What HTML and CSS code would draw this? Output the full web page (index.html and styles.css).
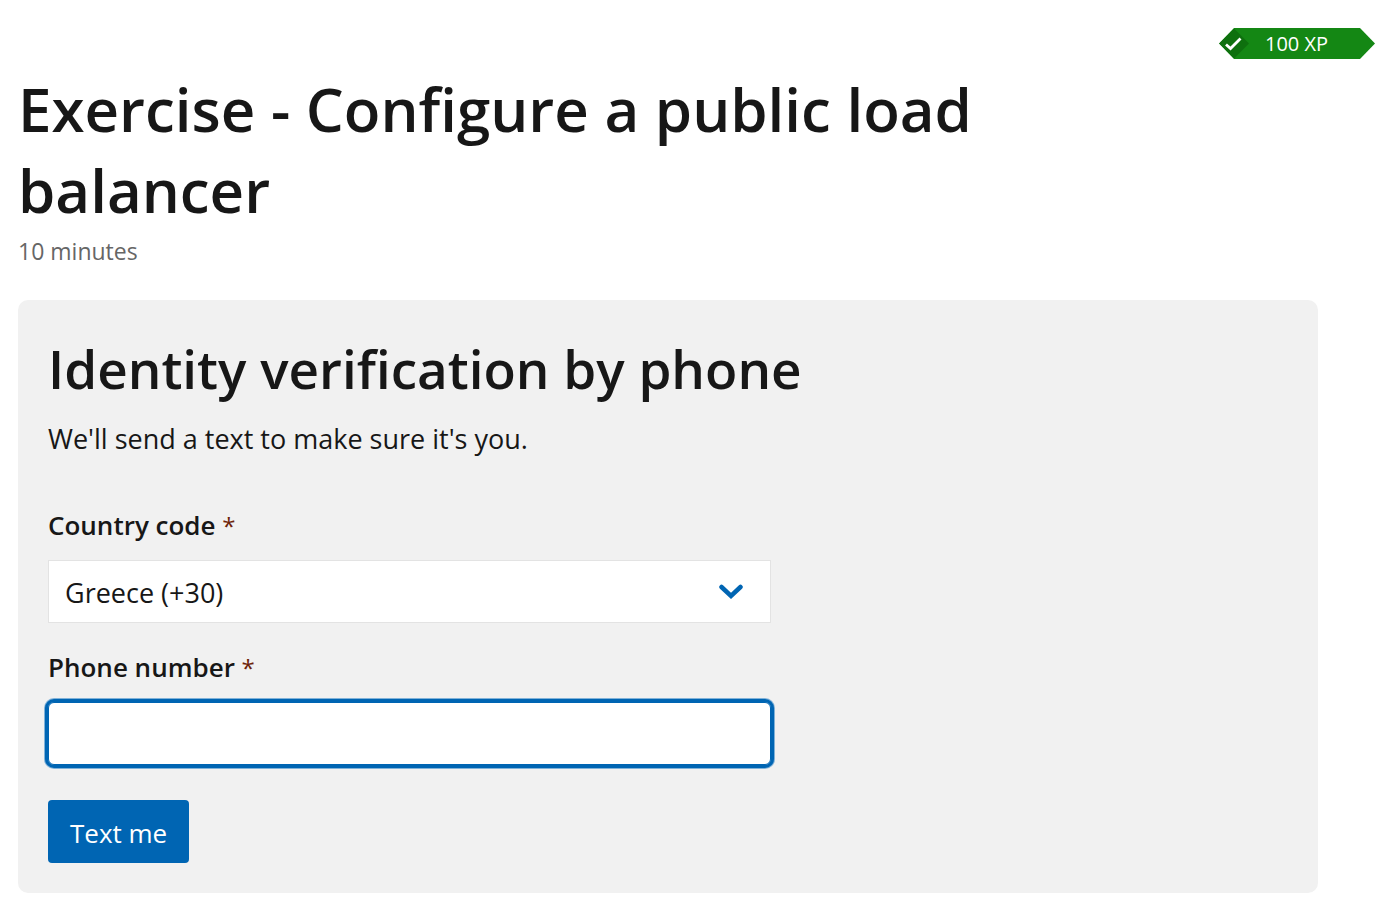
FILE: index.html
```html
<!DOCTYPE html>
<html lang="en">
<head>
<meta charset="utf-8">
<meta name="viewport" content="width=device-width, initial-scale=1">
<title>Exercise - Configure a public load balancer</title>
<link rel="stylesheet" href="styles.css">
</head>
<body>
<main class="page">
  <div class="xp-row">
    <div class="xp">
      <svg class="xp-check" viewBox="0 0 30 31" aria-hidden="true">
        <path d="M0 15.5 15 0.500 30 15.500 15 30.500Z" fill="#0e700e"/>
        <path d="M7 16.500 11.500 20.500 21.500 10.500" fill="none" stroke="#fff" stroke-width="2.800"/>
      </svg>
      <span class="xp-label">100 XP</span>
    </div>
  </div>
  <header class="unit-header">
    <h1 class="title">Exercise - Configure a public load balancer</h1>
    <p class="duration">10 minutes</p>
  </header>
  <section class="panel">
    <h2 class="panel-title">Identity verification by phone</h2>
    <p class="panel-text">We'll send a text to make sure it's you.</p>
    <form class="form">
      <div class="field">
        <label class="label" for="country">Country code <span class="required">*</span></label>
        <div class="select-wrap">
          <select class="control select" id="country">
            <option>Greece (+30)</option>
          </select>
          <svg class="chevron" viewBox="0 0 24 16" aria-hidden="true">
            <path d="M2.500 3 12 12 21.500 3" fill="none" stroke="#0065b3" stroke-width="4.500" stroke-linecap="round"/>
          </svg>
        </div>
      </div>
      <div class="field">
        <label class="label" for="phone">Phone number <span class="required">*</span></label>
        <input class="control phone" id="phone" type="tel" required>
      </div>
      <button class="submit" type="button">Text me</button>
    </form>
  </section>
</main>
</body>
</html>
```
FILE: styles.css
```css
* {
  box-sizing: border-box;
}

body {
  margin: 0;
  background: #fff;
  color: #171717;
  font-family: "Segoe UI", "Open Sans", "Noto Sans", sans-serif;
  font-size: 26px;
}

h1, h2, p {
  margin: 0;
}

.page {
  padding: 28px 0 14px 18px;
}

.xp-row {
  display: flex;
  justify-content: flex-end;
}

.xp {
  display: flex;
  align-items: center;
  width: 156px;
  height: 31px;
  background: #148714;
  color: #fff;
  font-size: 20px;
  font-weight: 500;
  line-height: 31px;
  clip-path: polygon(0 50%, 15px 0, calc(100% - 15px) 0, 100% 50%, calc(100% - 15px) 100%, 15px 100%);
}

.xp-check {
  width: 30px;
  height: 31px;
}

.xp-label {
  padding-left: 16px;
}

.unit-header {
  max-width: 1100px;
  padding-top: 10px;
}

.title {
  font-size: 60px;
  font-weight: 600;
  line-height: 81px;
}

.duration {
  color: #666;
  font-size: 23px;
  line-height: 40px;
}

.panel {
  margin: 29px 57px 0 0;
  padding: 30px;
  border-radius: 10px;
  background: #f1f1f1;
}

.panel-title {
  font-size: 53px;
  font-weight: 600;
  line-height: 78px;
}

.panel-text {
  padding-top: 11px;
  font-size: 27px;
  line-height: 40px;
}

.form {
  display: flex;
  flex-direction: column;
  align-items: flex-start;
  gap: 24px;
  width: calc(100% * 7 / 12);
  padding-top: 46px;
}

.field {
  display: flex;
  flex-direction: column;
  gap: 15px;
  width: 100%;
}

.label {
  font-weight: 600;
  line-height: 40px;
}

.required {
  color: #6d2309;
  font-size: 24px;
  font-weight: 400;
  line-height: 1;
}

.select-wrap {
  display: grid;
  align-items: center;
}

.control {
  width: 100%;
  height: 63px;
  padding: 0 16px;
  border: 1px solid #e3e3e3;
  border-radius: 0;
  background: #fff;
  color: inherit;
  font: inherit;
  font-size: 27px;
}

.select {
  grid-area: 1 / 1;
  padding-top: 2px;
  appearance: none;
}

.chevron {
  grid-area: 1 / 1;
  justify-self: end;
  width: 24px;
  height: 16px;
  margin-right: 28px;
  pointer-events: none;
}

.phone {
  border-color: #0065b3;
  border-radius: 6px;
  outline: 3px solid #0065b3;
  box-shadow: 0 0 0 4px #80b2d9;
}

.submit {
  height: 63px;
  margin-top: 11px;
  padding: 2px 22px 0;
  border: 0;
  border-radius: 4px;
  background: #0065b3;
  color: #fff;
  font: inherit;
}
```
